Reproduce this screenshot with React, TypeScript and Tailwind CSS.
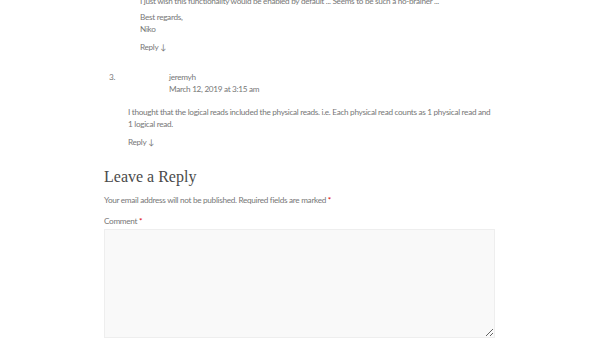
export default function App() {
  return (
    <main
      className="min-h-screen bg-white text-[8.2px] leading-[12px] tracking-[-0.3px] text-[#777]"
      style={{ fontFamily: '"Lato", "Liberation Sans", sans-serif' }}
    >
      <div className="w-[391px] ml-[104px] -mt-[5px]">
        {/* previous comment tail */}
        <div className="pl-[36px]">
          <p>I just wish this functionality would be enabled by default ... Seems to be such a no-brainer ...</p>
          <p className="mt-[4px]">Best regards,</p>
          <p>Niko</p>
          <p className="mt-[6px]">Reply ↓</p>
        </div>

        {/* comment 3 */}
        <div className="mt-[18px] flex">
          <span className="w-[65px] pl-[5px]">3.</span>
          <div>
            <p>jeremyh</p>
            <p>March 12, 2019 at 3:15 am</p>
          </div>
        </div>
        <div className="pl-[24px] mt-[11px]">
          <p>
            I thought that the logical reads included the physical reads. i.e. Each physical read counts as 1 physical
            read and 1 logical read.
          </p>
          <p className="mt-[6px]">Reply ↓</p>
        </div>

        {/* reply form */}
        <h3
          className="mt-[17px] text-[16px] leading-[24px] tracking-normal text-[#4a4a4a]"
          style={{ fontFamily: '"Liberation Serif", serif' }}
        >
          Leave a Reply
        </h3>
        <p className="mt-[5px]">
          Your email address will not be published. Required fields are marked <span className="text-[#d00]">*</span>
        </p>
        <p className="mt-[9px]">
          Comment <span className="text-[#d00]">*</span>
        </p>
        <textarea className="mt-[2px] block w-[391px] h-[109px] bg-[#f9f9f9] border border-[#eee] outline-none" />
      </div>
    </main>
  );
}
